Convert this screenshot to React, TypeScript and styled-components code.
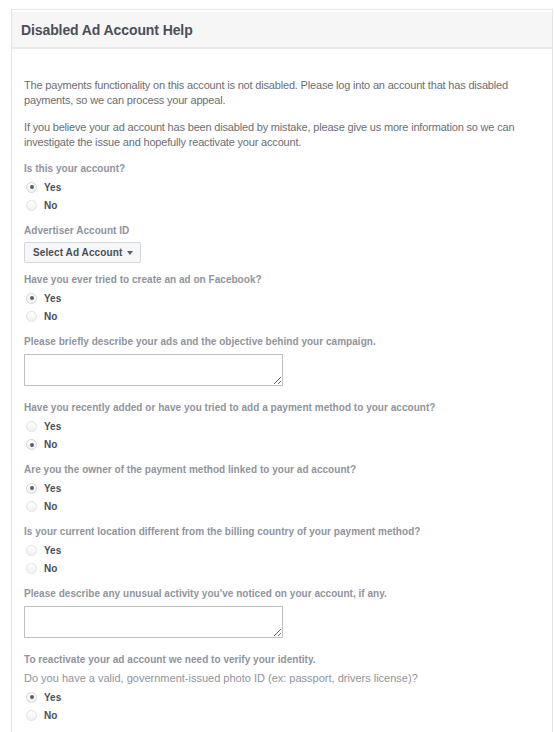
import React from "react";
import styled, { createGlobalStyle } from "styled-components";

const Global = createGlobalStyle`
  html, body { margin: 0; padding: 0; background: #fff; }
  body { font-family: "Liberation Sans", Arial, Helvetica, sans-serif; -webkit-font-smoothing: antialiased; }
  * { box-sizing: border-box; }
`;

const Page = styled.div`
  padding: 9px 0 0 11px;
  width: 554px;
  height: 732px;
  overflow: hidden;
`;

const Card = styled.div`
  width: 542px;
  border: 1px solid #e5e5e5;
  border-bottom: none;
  padding: 2px 2px 0 2px;
  min-height: 740px;
`;

const Header = styled.div`
  height: 37px;
  background: #f6f6f6;
  border-bottom: 2px solid #e9e9e9;
  display: flex;
  align-items: center;
  margin: 0 -2px;
  padding-left: 9px;
  font-size: 14px;
  letter-spacing: -0.1px;
  font-weight: bold;
  color: #4b4f56;
`;

const Body = styled.div`
  padding: 29px 10px 0 10px;
`;

const Para = styled.p<{ $gap?: number }>`
  margin: 0 0 ${(p) => p.$gap ?? 12}px 0;
  font-size: 11px;
  line-height: 15px;
  letter-spacing: -0.18px;
  color: #6b6e74;
`;

const Group = styled.div<{ $extra?: number }>`
  margin-bottom: ${(p) => 8 + (p.$extra ?? 0)}px;
`;

const Label = styled.div<{ $gap?: number; $plain?: boolean }>`
  font-size: ${(p) => (p.$plain ? 11 : 10)}px;
  letter-spacing: ${(p) => (p.$plain ? 0 : 0.03)}px;
  line-height: 15px;
  font-weight: ${(p) => (p.$plain ? "normal" : "bold")};
  color: #90949c;
  margin-bottom: ${(p) => p.$gap ?? 2}px;
`;

const RadioRow = styled.label`
  display: flex;
  align-items: center;
  height: 18.5px;
  padding-left: 2px;
  font-size: 10px;
  font-weight: bold;
  color: #4b4f56;
  gap: 7px;
`;

const RadioCircle = styled.span<{ $on: boolean }>`
  width: 11px;
  height: 11px;
  border-radius: 50%;
  border: 1px solid ${(p) => (p.$on ? "#d6d6d6" : "#e2e2e2")};
  background: linear-gradient(#ffffff, #f1f1f1);
  display: flex;
  align-items: center;
  justify-content: center;
  flex: none;
  &::after {
    content: "";
    width: 4px;
    height: 4px;
    border-radius: 50%;
    background: ${(p) => (p.$on ? "#5a5e66" : "transparent")};
  }
`;

const SelectButton = styled.button`
  display: inline-flex;
  align-items: center;
  gap: 5px;
  height: 21px;
  padding: 0 7px 0 8px;
  border: 1px solid #d3d6db;
  border-radius: 2px;
  background: #f6f7f9;
  font-family: inherit;
  font-size: 10px;
  letter-spacing: 0.1px;
  font-weight: bold;
  color: #4b4f56;
  cursor: pointer;
`;

const Caret = styled.span`
  width: 0;
  height: 0;
  border-left: 3.5px solid transparent;
  border-right: 3.5px solid transparent;
  border-top: 4px solid #5a5e66;
  margin-top: 1px;
`;

const TextArea = styled.textarea`
  display: block;
  width: 259px;
  height: 32px;
  border: 1px solid #bdc0c4;
  border-radius: 0;
  resize: both;
  font-family: inherit;
  font-size: 11px;
  outline: none;
  padding: 3px;
`;

type Q = { label: string; value: "Yes" | "No" | null };

function Radio({ label, on }: { label: string; on: boolean }) {
  return (
    <RadioRow>
      <RadioCircle $on={on} />
      {label}
    </RadioRow>
  );
}

function YesNo({ label, value }: Q) {
  return (
    <Group>
      <Label>{label}</Label>
      <Radio label="Yes" on={value === "Yes"} />
      <Radio label="No" on={value === "No"} />
    </Group>
  );
}

function TextQ({ label }: { label: string }) {
  return (
    <Group $extra={6}>
      <Label $gap={5}>{label}</Label>
      <TextArea />
    </Group>
  );
}

export default function App() {
  return (
    <>
      <Global />
      <Page>
        <Card>
          <Header>Disabled Ad Account Help</Header>
          <Body>
            <Para>
              The payments functionality on this account is not disabled. Please log into an account that has disabled
              payments, so we can process your appeal.
            </Para>
            <Para $gap={11}>
              If you believe your ad account has been disabled by mistake, please give us more information so we can
              investigate the issue and hopefully reactivate your account.
            </Para>
            <YesNo label="Is this your account?" value="Yes" />
            <Group $extra={1}>
              <Label $gap={4}>Advertiser Account ID</Label>
              <SelectButton>
                Select Ad Account <Caret />
              </SelectButton>
            </Group>
            <YesNo label="Have you ever tried to create an ad on Facebook?" value="Yes" />
            <TextQ label="Please briefly describe your ads and the objective behind your campaign." />
            <YesNo
              label="Have you recently added or have you tried to add a payment method to your account?"
              value="No"
            />
            <YesNo label="Are you the owner of the payment method linked to your ad account?" value="Yes" />
            <YesNo label="Is your current location different from the billing country of your payment method?" value={null} />
            <TextQ label="Please describe any unusual activity you've noticed on your account, if any." />
            <Group>
              <Label $gap={4}>To reactivate your ad account we need to verify your identity.</Label>
              <Label $plain $gap={2}>
                Do you have a valid, government-issued photo ID (ex: passport, drivers license)?
              </Label>
              <Radio label="Yes" on />
              <Radio label="No" on={false} />
            </Group>
          </Body>
        </Card>
      </Page>
    </>
  );
}
